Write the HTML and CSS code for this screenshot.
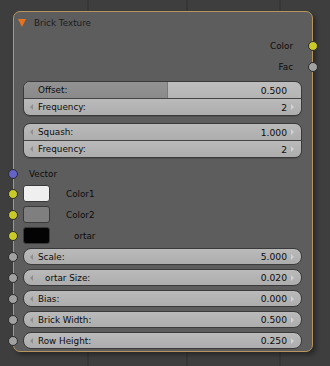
FILE: index.html
```html
<!DOCTYPE html>
<html>
<head>
<meta charset="utf-8">
<link rel="stylesheet" href="styles.css">
</head>
<body>
<div class="node">
  <div class="header">
    <span class="tri"></span>
    <span class="title">Brick Texture</span>
  </div>
  <div class="out out-color"><span>Color</span><i class="sock sock-r yellow"></i></div>
  <div class="out out-fac"><span>Fac</span><i class="sock sock-r grey"></i></div>

  <div class="group g1">
    <div class="frow slider">
      <div class="fill"></div>
      <span class="lab">Offset:</span><span class="val">0.500</span>
    </div>
    <div class="sep"></div>
    <div class="frow"><span class="arr l"></span><span class="lab">Frequency:</span><span class="val">2</span><span class="arr r"></span></div>
  </div>

  <div class="group g2">
    <div class="frow"><span class="arr l"></span><span class="lab">Squash:</span><span class="val">1.000</span><span class="arr r"></span></div>
    <div class="sep"></div>
    <div class="frow"><span class="arr l"></span><span class="lab">Frequency:</span><span class="val">2</span><span class="arr r"></span></div>
  </div>

  <div class="vec"><i class="sock sock-l purple"></i><span>Vector</span></div>

  <div class="crow c1"><i class="sock sock-l yellow"></i><span class="sw white"></span><span class="clab">Color1</span></div>
  <div class="crow"><i class="sock sock-l yellow"></i><span class="sw mid"></span><span class="clab">Color2</span></div>
  <div class="crow"><i class="sock sock-l yellow"></i><span class="sw black"></span><span class="clab mort">ortar</span></div>

  <div class="field first"><i class="sock sock-l grey"></i><span class="arr l"></span><span class="lab">Scale:</span><span class="val">5.000</span><span class="arr r"></span></div>
  <div class="field"><i class="sock sock-l grey"></i><span class="arr l"></span><span class="lab mort2">ortar Size:</span><span class="val">0.020</span><span class="arr r"></span></div>
  <div class="field"><i class="sock sock-l grey"></i><span class="arr l"></span><span class="lab">Bias:</span><span class="val">0.000</span><span class="arr r"></span></div>
  <div class="field"><i class="sock sock-l grey"></i><span class="arr l"></span><span class="lab">Brick Width:</span><span class="val">0.500</span><span class="arr r"></span></div>
  <div class="field"><i class="sock sock-l grey"></i><span class="arr l"></span><span class="lab">Row Height:</span><span class="val">0.250</span><span class="arr r"></span></div>
</div>
</body>
</html>
```
FILE: styles.css
```css
html, body {
  margin: 0;
  padding: 0;
}
body {
  width: 330px;
  height: 366px;
  overflow: hidden;
  background-color: #3e3e3e;
  background-image:
    linear-gradient(to right, transparent 87px, #363636 87px, #363636 89px, transparent 89px,
                    transparent 186px, #363636 186px, #363636 188px, transparent 188px,
                    transparent 279px, #363636 279px, #363636 281px, transparent 281px);
  font-family: "DejaVu Sans", "Liberation Sans", sans-serif;
  font-size: 9px;
  color: #0c0c0c;
  padding-top: 11px;
  box-sizing: border-box;
}
.node {
  margin-left: 13px;
  width: 300px;
  height: 341px;
  box-sizing: border-box;
  border: 1px solid #b8955c;
  border-radius: 7px;
  background: #5d5d5d;
  padding: 0 10px 0 9px;
  display: flex;
  flex-direction: column;
  box-shadow: 3px 3px 4px rgba(0,0,0,0.35);
}
.header {
  height: 21px;
  display: flex;
  align-items: center;
  margin-left: -5px;
}
.tri {
  width: 0;
  height: 0;
  border-left: 4px solid transparent;
  border-right: 4px solid transparent;
  border-top: 8px solid #e8711c;
  margin-right: 8px;
  margin-top: 1px;
}
.title {
  font-size: 8.8px;
  color: #1c1c1c;
}
.out {
  position: relative;
  height: 21px;
  display: flex;
  align-items: center;
  justify-content: flex-end;
  padding-right: 9px;
  font-size: 8.8px;
}
.out-color { margin-top: 2px; }
.sock {
  position: absolute;
  top: 50%;
  width: 8px;
  height: 8px;
  margin-top: -5px;
  border-radius: 50%;
  border: 1px solid #2a2a2a;
}
.sock-r { right: -16px; }
.sock-l { left: -15px; }
.yellow { background: #c9c928; }
.grey { background: #a1a1a1; }
.purple { background: #6464c8; }

.group {
  border: 1px solid #3a3a3a;
  border-radius: 7px;
  overflow: hidden;
  display: flex;
  flex-direction: column;
  box-shadow: 0 1px 0 rgba(0,0,0,0.15);
}
.g1 { margin-top: 4px; }
.g2 { margin-top: 7px; }
.sep {
  height: 1px;
  background: #444;
}
.frow, .field {
  position: relative;
  display: flex;
  align-items: center;
  padding: 0 14px;
  background: linear-gradient(#bababa, #adadad);
  font-size: 8.8px;
}
.frow { height: 16px; }
.slider { background: linear-gradient(#bebebe, #b4b4b4); }
.fill {
  position: absolute;
  left: 0;
  top: 0;
  bottom: 0;
  width: 51.5%;
  background: linear-gradient(#939393, #8a8a8a);
  border-right: 1px solid #7a7a7a;
}
.lab, .val { position: relative; }
.lab { flex: 1; }
.val { font-size: 9.2px; }
.arr {
  position: absolute;
  top: 50%;
  margin-top: -3px;
  width: 0;
  height: 0;
  border-top: 3px solid transparent;
  border-bottom: 3px solid transparent;
}
.arr.l { left: 6px; border-right: 3px solid #8e8e8e; }
.arr.r { right: 7px; border-left: 3px solid #d2d2d2; }

.vec {
  position: relative;
  height: 18px;
  margin-top: 7px;
  display: flex;
  align-items: center;
  padding-left: 6px;
  font-size: 8.8px;
}
.crow {
  position: relative;
  height: 17px;
  margin-top: 4px;
  display: flex;
  align-items: center;
  font-size: 8.8px;
}
.crow.c1 { margin-top: 2px; }
.sw {
  width: 25px;
  height: 15px;
  border: 1px solid #3a3a3a;
  border-radius: 3px;
  margin-right: 16px;
}
.sw.white { background: #efefef; }
.sw.mid { background: #7f7f7f; }
.sw.black { background: #030303; }
.clab.mort { margin-left: 8px; }

.field {
  height: 15px;
  margin-top: 4px;
  border: 1px solid #3a3a3a;
  border-radius: 8px;
}
.field.first { margin-top: 4px; }
.field .sock { margin-top: -5px; }
.field .sock-l { left: -16px; }
.lab.mort2 { padding-left: 7px; }
```
